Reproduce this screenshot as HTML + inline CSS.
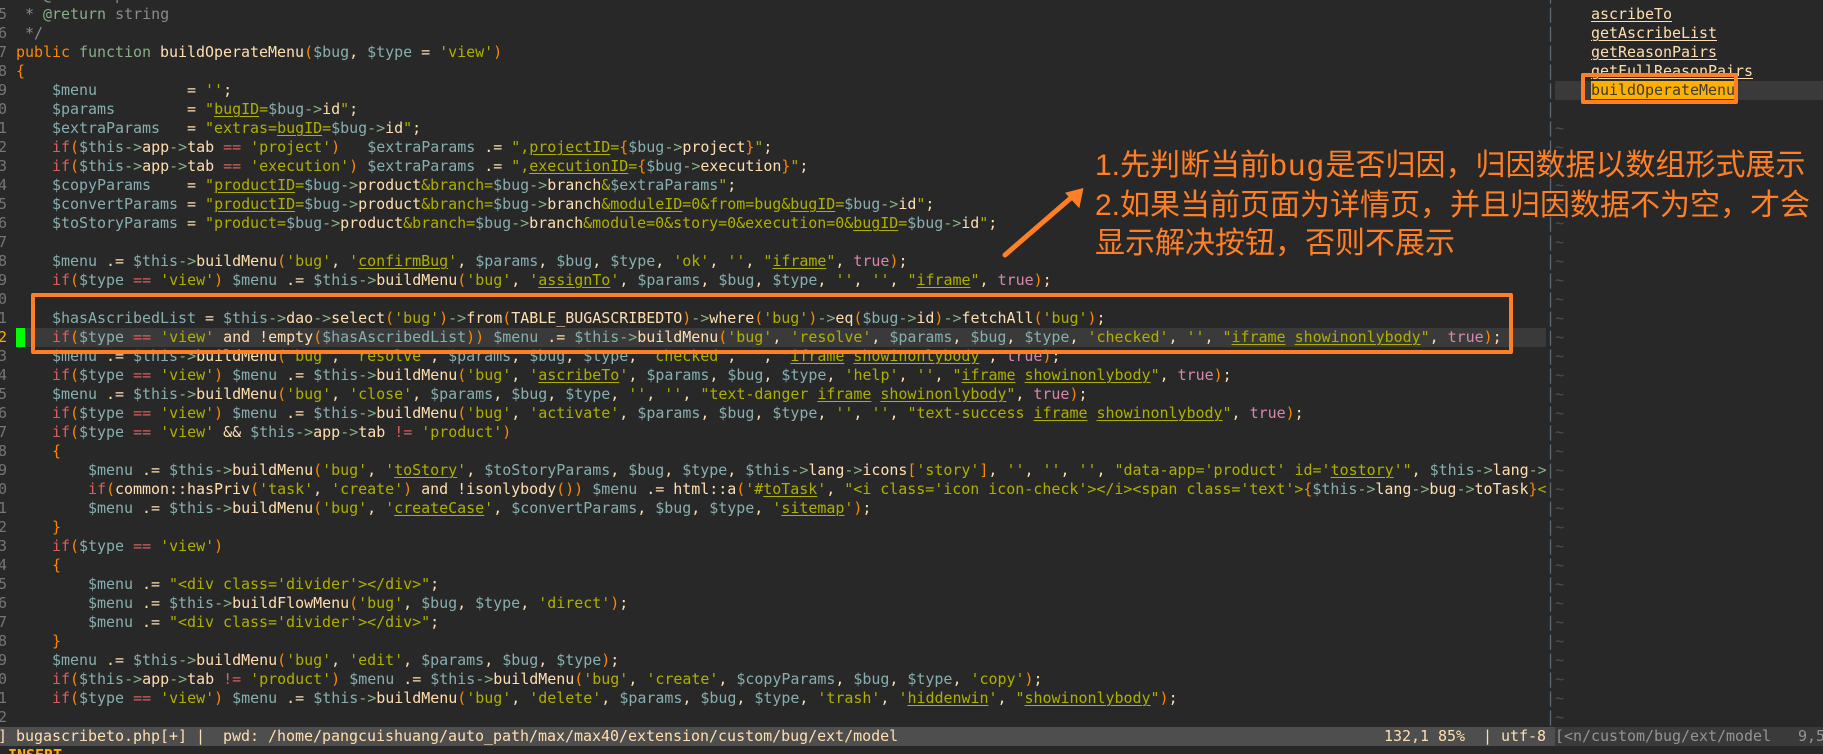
<!DOCTYPE html>
<html lang="zh">
<head>
<meta charset="utf-8">
<title>vim</title>
<style>
html{margin:0;padding:0;background:#282828;width:1823px;height:754px;overflow:hidden;}
body{margin:0;padding:0;background:#282828;}
#w{position:relative;width:1823px;height:754px;overflow:hidden;font-family:"DejaVu Sans Mono","Liberation Mono",monospace;font-size:15px;color:#ffdfaf;}
pre{margin:0;font:inherit;line-height:19px;letter-spacing:-0.03px;font-kerning:none;position:absolute;white-space:pre;}
i{font-style:normal}
.v{color:#87afaf}.a{color:#87af87}.k{color:#d75f5f}.p{color:#ff8700}.s{color:#afaf00}.t{color:#d787af}.c{color:#8a8a8a}
.u{color:#afaf00;text-decoration:underline;text-decoration-thickness:1px;text-underline-offset:2px}
.f{text-decoration:underline;text-decoration-thickness:1px;text-underline-offset:2px}
.abs{position:absolute}
.box{position:absolute;border:4px solid #ff7f27;border-radius:2px;box-sizing:border-box}
.note{position:absolute;left:1095px;color:#ff7f27;font-family:"Liberation Sans","WenQuanYi Zen Hei","Noto Sans CJK SC",sans-serif;font-size:30px;line-height:38px;white-space:nowrap;font-weight:400}
.note span{letter-spacing:1.8px}
</style>
</head>
<body>
<div id="w">
<div class="abs" style="left:25px;top:328px;width:1521px;height:19px;background:#3a3a3a"></div>
<div class="abs" style="left:1555px;top:81px;width:268px;height:19px;background:#3a3a3a"></div>
<div class="abs" style="left:16px;top:328px;width:9px;height:19px;background:#00ff00"></div>

<pre style="left:-2px;top:-14px;color:#767676">4
5
6
7
8
9
0
1
2
3
4
5
6
7
8
9
0
1
<span style="color:#ffaf00">2</span>
3
4
5
6
7
8
9
0
1
2
3
4
5
6
7
8
9
0
1
2</pre>

<div class="abs" style="left:16px;top:-14px;width:1530px;height:741px;overflow:hidden">
<pre style="left:0;top:0"> <i class="c">*</i> <i class="a">@access</i> <i class="c">public</i>
 <i class="c">*</i> <i class="a">@return</i> <i class="c">string</i>
 <i class="c">*/</i>
<i class="p">public</i> <i class="a">function</i> buildOperateMenu<i class="p">(</i><i class="v">$bug</i>, <i class="v">$type</i> = <i class="s">'view'</i><i class="p">)</i>
<i class="p">{</i>
    <i class="v">$menu</i>          = <i class="s">''</i>;
    <i class="v">$params</i>        = <i class="s">"</i><i class="u">bugID</i><i class="s">=</i><i class="v">$bug</i><i class="a">-&gt;</i>id<i class="s">"</i>;
    <i class="v">$extraParams</i>   = <i class="s">"extras=</i><i class="u">bugID</i><i class="s">=</i><i class="v">$bug</i><i class="a">-&gt;</i>id<i class="s">"</i>;
    <i class="k">if</i><i class="p">(</i><i class="v">$this</i><i class="a">-&gt;</i>app<i class="a">-&gt;</i>tab <i class="k">==</i> <i class="s">'project'</i><i class="p">)</i>   <i class="v">$extraParams</i> .= <i class="s">",</i><i class="u">projectID</i><i class="s">=</i><i class="p">{</i><i class="v">$bug</i><i class="a">-&gt;</i>project<i class="p">}</i><i class="s">"</i>;
    <i class="k">if</i><i class="p">(</i><i class="v">$this</i><i class="a">-&gt;</i>app<i class="a">-&gt;</i>tab <i class="k">==</i> <i class="s">'execution'</i><i class="p">)</i> <i class="v">$extraParams</i> .= <i class="s">",</i><i class="u">executionID</i><i class="s">=</i><i class="p">{</i><i class="v">$bug</i><i class="a">-&gt;</i>execution<i class="p">}</i><i class="s">"</i>;
    <i class="v">$copyParams</i>    = <i class="s">"</i><i class="u">productID</i><i class="s">=</i><i class="v">$bug</i><i class="a">-&gt;</i>product<i class="s">&amp;branch=</i><i class="v">$bug</i><i class="a">-&gt;</i>branch<i class="s">&amp;</i><i class="v">$extraParams</i><i class="s">"</i>;
    <i class="v">$convertParams</i> = <i class="s">"</i><i class="u">productID</i><i class="s">=</i><i class="v">$bug</i><i class="a">-&gt;</i>product<i class="s">&amp;branch=</i><i class="v">$bug</i><i class="a">-&gt;</i>branch<i class="s">&amp;</i><i class="u">moduleID</i><i class="s">=0&amp;from=bug&amp;</i><i class="u">bugID</i><i class="s">=</i><i class="v">$bug</i><i class="a">-&gt;</i>id<i class="s">"</i>;
    <i class="v">$toStoryParams</i> = <i class="s">"product=</i><i class="v">$bug</i><i class="a">-&gt;</i>product<i class="s">&amp;branch=</i><i class="v">$bug</i><i class="a">-&gt;</i>branch<i class="s">&amp;module=0&amp;story=0&amp;execution=0&amp;</i><i class="u">bugID</i><i class="s">=</i><i class="v">$bug</i><i class="a">-&gt;</i>id<i class="s">"</i>;

    <i class="v">$menu</i> .= <i class="v">$this</i><i class="a">-&gt;</i>buildMenu<i class="p">(</i><i class="s">'bug'</i>, <i class="s">'</i><i class="u">confirmBug</i><i class="s">'</i>, <i class="v">$params</i>, <i class="v">$bug</i>, <i class="v">$type</i>, <i class="s">'ok'</i>, <i class="s">''</i>, <i class="s">"</i><i class="u">iframe</i><i class="s">"</i>, <i class="t">true</i><i class="p">)</i>;
    <i class="k">if</i><i class="p">(</i><i class="v">$type</i> <i class="k">==</i> <i class="s">'view'</i><i class="p">)</i> <i class="v">$menu</i> .= <i class="v">$this</i><i class="a">-&gt;</i>buildMenu<i class="p">(</i><i class="s">'bug'</i>, <i class="s">'</i><i class="u">assignTo</i><i class="s">'</i>, <i class="v">$params</i>, <i class="v">$bug</i>, <i class="v">$type</i>, <i class="s">''</i>, <i class="s">''</i>, <i class="s">"</i><i class="u">iframe</i><i class="s">"</i>, <i class="t">true</i><i class="p">)</i>;

    <i class="v">$hasAscribedList</i> = <i class="v">$this</i><i class="a">-&gt;</i>dao<i class="a">-&gt;</i>select<i class="p">(</i><i class="s">'bug'</i><i class="p">)</i><i class="a">-&gt;</i>from<i class="p">(</i>TABLE_BUGASCRIBEDTO<i class="p">)</i><i class="a">-&gt;</i>where<i class="p">(</i><i class="s">'bug'</i><i class="p">)</i><i class="a">-&gt;</i>eq<i class="p">(</i><i class="v">$bug</i><i class="a">-&gt;</i>id<i class="p">)</i><i class="a">-&gt;</i>fetchAll<i class="p">(</i><i class="s">'bug'</i><i class="p">)</i>;
    <i class="k">if</i><i class="p">(</i><i class="v">$type</i> <i class="k">==</i> <i class="s">'view'</i> and !empty<i class="p">(</i><i class="v">$hasAscribedList</i><i class="p">))</i> <i class="v">$menu</i> .= <i class="v">$this</i><i class="a">-&gt;</i>buildMenu<i class="p">(</i><i class="s">'bug'</i>, <i class="s">'resolve'</i>, <i class="v">$params</i>, <i class="v">$bug</i>, <i class="v">$type</i>, <i class="s">'checked'</i>, <i class="s">''</i>, <i class="s">"</i><i class="u">iframe</i> <i class="u">showinonlybody</i><i class="s">"</i>, <i class="t">true</i><i class="p">)</i>;
    <i class="v">$menu</i> .= <i class="v">$this</i><i class="a">-&gt;</i>buildMenu<i class="p">(</i><i class="s">'bug'</i>, <i class="s">'resolve'</i>, <i class="v">$params</i>, <i class="v">$bug</i>, <i class="v">$type</i>, <i class="s">'checked'</i>, <i class="s">''</i>, <i class="s">"</i><i class="u">iframe</i> <i class="u">showinonlybody</i><i class="s">"</i>, <i class="t">true</i><i class="p">)</i>;
    <i class="k">if</i><i class="p">(</i><i class="v">$type</i> <i class="k">==</i> <i class="s">'view'</i><i class="p">)</i> <i class="v">$menu</i> .= <i class="v">$this</i><i class="a">-&gt;</i>buildMenu<i class="p">(</i><i class="s">'bug'</i>, <i class="s">'</i><i class="u">ascribeTo</i><i class="s">'</i>, <i class="v">$params</i>, <i class="v">$bug</i>, <i class="v">$type</i>, <i class="s">'help'</i>, <i class="s">''</i>, <i class="s">"</i><i class="u">iframe</i> <i class="u">showinonlybody</i><i class="s">"</i>, <i class="t">true</i><i class="p">)</i>;
    <i class="v">$menu</i> .= <i class="v">$this</i><i class="a">-&gt;</i>buildMenu<i class="p">(</i><i class="s">'bug'</i>, <i class="s">'close'</i>, <i class="v">$params</i>, <i class="v">$bug</i>, <i class="v">$type</i>, <i class="s">''</i>, <i class="s">''</i>, <i class="s">"text-danger </i><i class="u">iframe</i> <i class="u">showinonlybody</i><i class="s">"</i>, <i class="t">true</i><i class="p">)</i>;
    <i class="k">if</i><i class="p">(</i><i class="v">$type</i> <i class="k">==</i> <i class="s">'view'</i><i class="p">)</i> <i class="v">$menu</i> .= <i class="v">$this</i><i class="a">-&gt;</i>buildMenu<i class="p">(</i><i class="s">'bug'</i>, <i class="s">'activate'</i>, <i class="v">$params</i>, <i class="v">$bug</i>, <i class="v">$type</i>, <i class="s">''</i>, <i class="s">''</i>, <i class="s">"text-success </i><i class="u">iframe</i> <i class="u">showinonlybody</i><i class="s">"</i>, <i class="t">true</i><i class="p">)</i>;
    <i class="k">if</i><i class="p">(</i><i class="v">$type</i> <i class="k">==</i> <i class="s">'view'</i> &amp;&amp; <i class="v">$this</i><i class="a">-&gt;</i>app<i class="a">-&gt;</i>tab <i class="k">!=</i> <i class="s">'product'</i><i class="p">)</i>
    <i class="p">{</i>
        <i class="v">$menu</i> .= <i class="v">$this</i><i class="a">-&gt;</i>buildMenu<i class="p">(</i><i class="s">'bug'</i>, <i class="s">'</i><i class="u">toStory</i><i class="s">'</i>, <i class="v">$toStoryParams</i>, <i class="v">$bug</i>, <i class="v">$type</i>, <i class="v">$this</i><i class="a">-&gt;</i>lang<i class="a">-&gt;</i>icons<i class="p">[</i><i class="s">'story'</i><i class="p">]</i>, <i class="s">''</i>, <i class="s">''</i>, <i class="s">''</i>, <i class="s">"data-app='product' id='</i><i class="u">tostory</i><i class="s">'"</i>, <i class="v">$this</i><i class="a">-&gt;</i>lang<i class="a">-&gt;</i>
        <i class="k">if</i><i class="p">(</i>common::hasPriv<i class="p">(</i><i class="s">'task'</i>, <i class="s">'create'</i><i class="p">)</i> and !isonlybody<i class="p">())</i> <i class="v">$menu</i> .= html::a<i class="p">(</i><i class="s">'#</i><i class="u">toTask</i><i class="s">'</i>, <i class="s">"&lt;i class='icon icon-check'&gt;&lt;/i&gt;&lt;span class='text'&gt;</i><i class="p">{</i><i class="v">$this</i><i class="a">-&gt;</i>lang<i class="a">-&gt;</i>bug<i class="a">-&gt;</i>toTask<i class="p">}</i><i class="s">&lt;</i>
        <i class="v">$menu</i> .= <i class="v">$this</i><i class="a">-&gt;</i>buildMenu<i class="p">(</i><i class="s">'bug'</i>, <i class="s">'</i><i class="u">createCase</i><i class="s">'</i>, <i class="v">$convertParams</i>, <i class="v">$bug</i>, <i class="v">$type</i>, <i class="s">'</i><i class="u">sitemap</i><i class="s">'</i><i class="p">)</i>;
    <i class="p">}</i>
    <i class="k">if</i><i class="p">(</i><i class="v">$type</i> <i class="k">==</i> <i class="s">'view'</i><i class="p">)</i>
    <i class="p">{</i>
        <i class="v">$menu</i> .= <i class="s">"&lt;div class='divider'&gt;&lt;/div&gt;"</i>;
        <i class="v">$menu</i> .= <i class="v">$this</i><i class="a">-&gt;</i>buildFlowMenu<i class="p">(</i><i class="s">'bug'</i>, <i class="v">$bug</i>, <i class="v">$type</i>, <i class="s">'direct'</i><i class="p">)</i>;
        <i class="v">$menu</i> .= <i class="s">"&lt;div class='divider'&gt;&lt;/div&gt;"</i>;
    <i class="p">}</i>
    <i class="v">$menu</i> .= <i class="v">$this</i><i class="a">-&gt;</i>buildMenu<i class="p">(</i><i class="s">'bug'</i>, <i class="s">'edit'</i>, <i class="v">$params</i>, <i class="v">$bug</i>, <i class="v">$type</i><i class="p">)</i>;
    <i class="k">if</i><i class="p">(</i><i class="v">$this</i><i class="a">-&gt;</i>app<i class="a">-&gt;</i>tab <i class="k">!=</i> <i class="s">'product'</i><i class="p">)</i> <i class="v">$menu</i> .= <i class="v">$this</i><i class="a">-&gt;</i>buildMenu<i class="p">(</i><i class="s">'bug'</i>, <i class="s">'create'</i>, <i class="v">$copyParams</i>, <i class="v">$bug</i>, <i class="v">$type</i>, <i class="s">'copy'</i><i class="p">)</i>;
    <i class="k">if</i><i class="p">(</i><i class="v">$type</i> <i class="k">==</i> <i class="s">'view'</i><i class="p">)</i> <i class="v">$menu</i> .= <i class="v">$this</i><i class="a">-&gt;</i>buildMenu<i class="p">(</i><i class="s">'bug'</i>, <i class="s">'delete'</i>, <i class="v">$params</i>, <i class="v">$bug</i>, <i class="v">$type</i>, <i class="s">'trash'</i>, <i class="s">'</i><i class="u">hiddenwin</i><i class="s">'</i>, <i class="s">"</i><i class="u">showinonlybody</i><i class="s">"</i><i class="p">)</i>;</pre>
</div>

<pre style="left:1546px;top:-14px;color:#5f6a72">|
|
|
|
|
|
|
|
|
|
|
|
|
|
|
|
|
|
|
|
|
|
|
|
|
|
|
|
|
|
|
|
|
|
|
|
|
|
|
</pre>
<pre style="left:1555px;top:-14px;color:#4e4e4e">







~
~
~
~
~
~
~
~
~
~
~
~
~
~
~
~
~
~
~
~
~
~
~
~
~
~
~
~
~
~
~
~</pre>
<pre style="left:1591px;top:5px"><i class="f">ascribeTo</i>
<i class="f">getAscribeList</i>
<i class="f">getReasonPairs</i>
<i class="f">getFullReasonPairs</i>
<i style="background:#ffaf00;color:#3a3a3a">buildOperateMenu</i></pre>

<div class="abs" style="left:0;top:727px;width:1555px;height:19px;background:#4e4e4e"></div>
<div class="abs" style="left:1555px;top:727px;width:268px;height:19px;background:#3a3a3a"></div>
<pre style="left:-2px;top:727px">] bugascribeto.php[+] |  pwd: /home/pangcuishuang/auto_path/max/max40/extension/custom/bug/ext/model</pre>
<pre style="left:1384px;top:727px">132,1 85%  | utf-8</pre>
<pre style="left:1555px;top:727px;color:#949494">[&lt;n/custom/bug/ext/model   9,5</pre>
<pre style="left:8px;top:746px;color:#ffaf00;font-weight:bold">INSERT</pre>

<div class="box" style="left:31px;top:293px;width:1482px;height:61px"></div>
<div class="box" style="left:1581px;top:73px;width:157px;height:31px"></div>

<svg class="abs" style="left:0;top:0" width="1823" height="754" viewBox="0 0 1823 754">
<line x1="1005" y1="255" x2="1072" y2="197" stroke="#ff7f27" stroke-width="5" stroke-linecap="round"/>
<polygon points="1083.5,188 1065,192.7 1079.3,208.3" fill="#ff7f27"/>
</svg>

<div class="note" style="top:147px">1.先判断当前<span>bug</span>是否归因，归因数据以数组形式展示</div>
<div class="note" style="top:187px">2.如果当前页面为详情页，并且归因数据不为空，才会</div>
<div class="note" style="top:225px">显示解决按钮，否则不展示</div>
</div>
</body>
</html>
